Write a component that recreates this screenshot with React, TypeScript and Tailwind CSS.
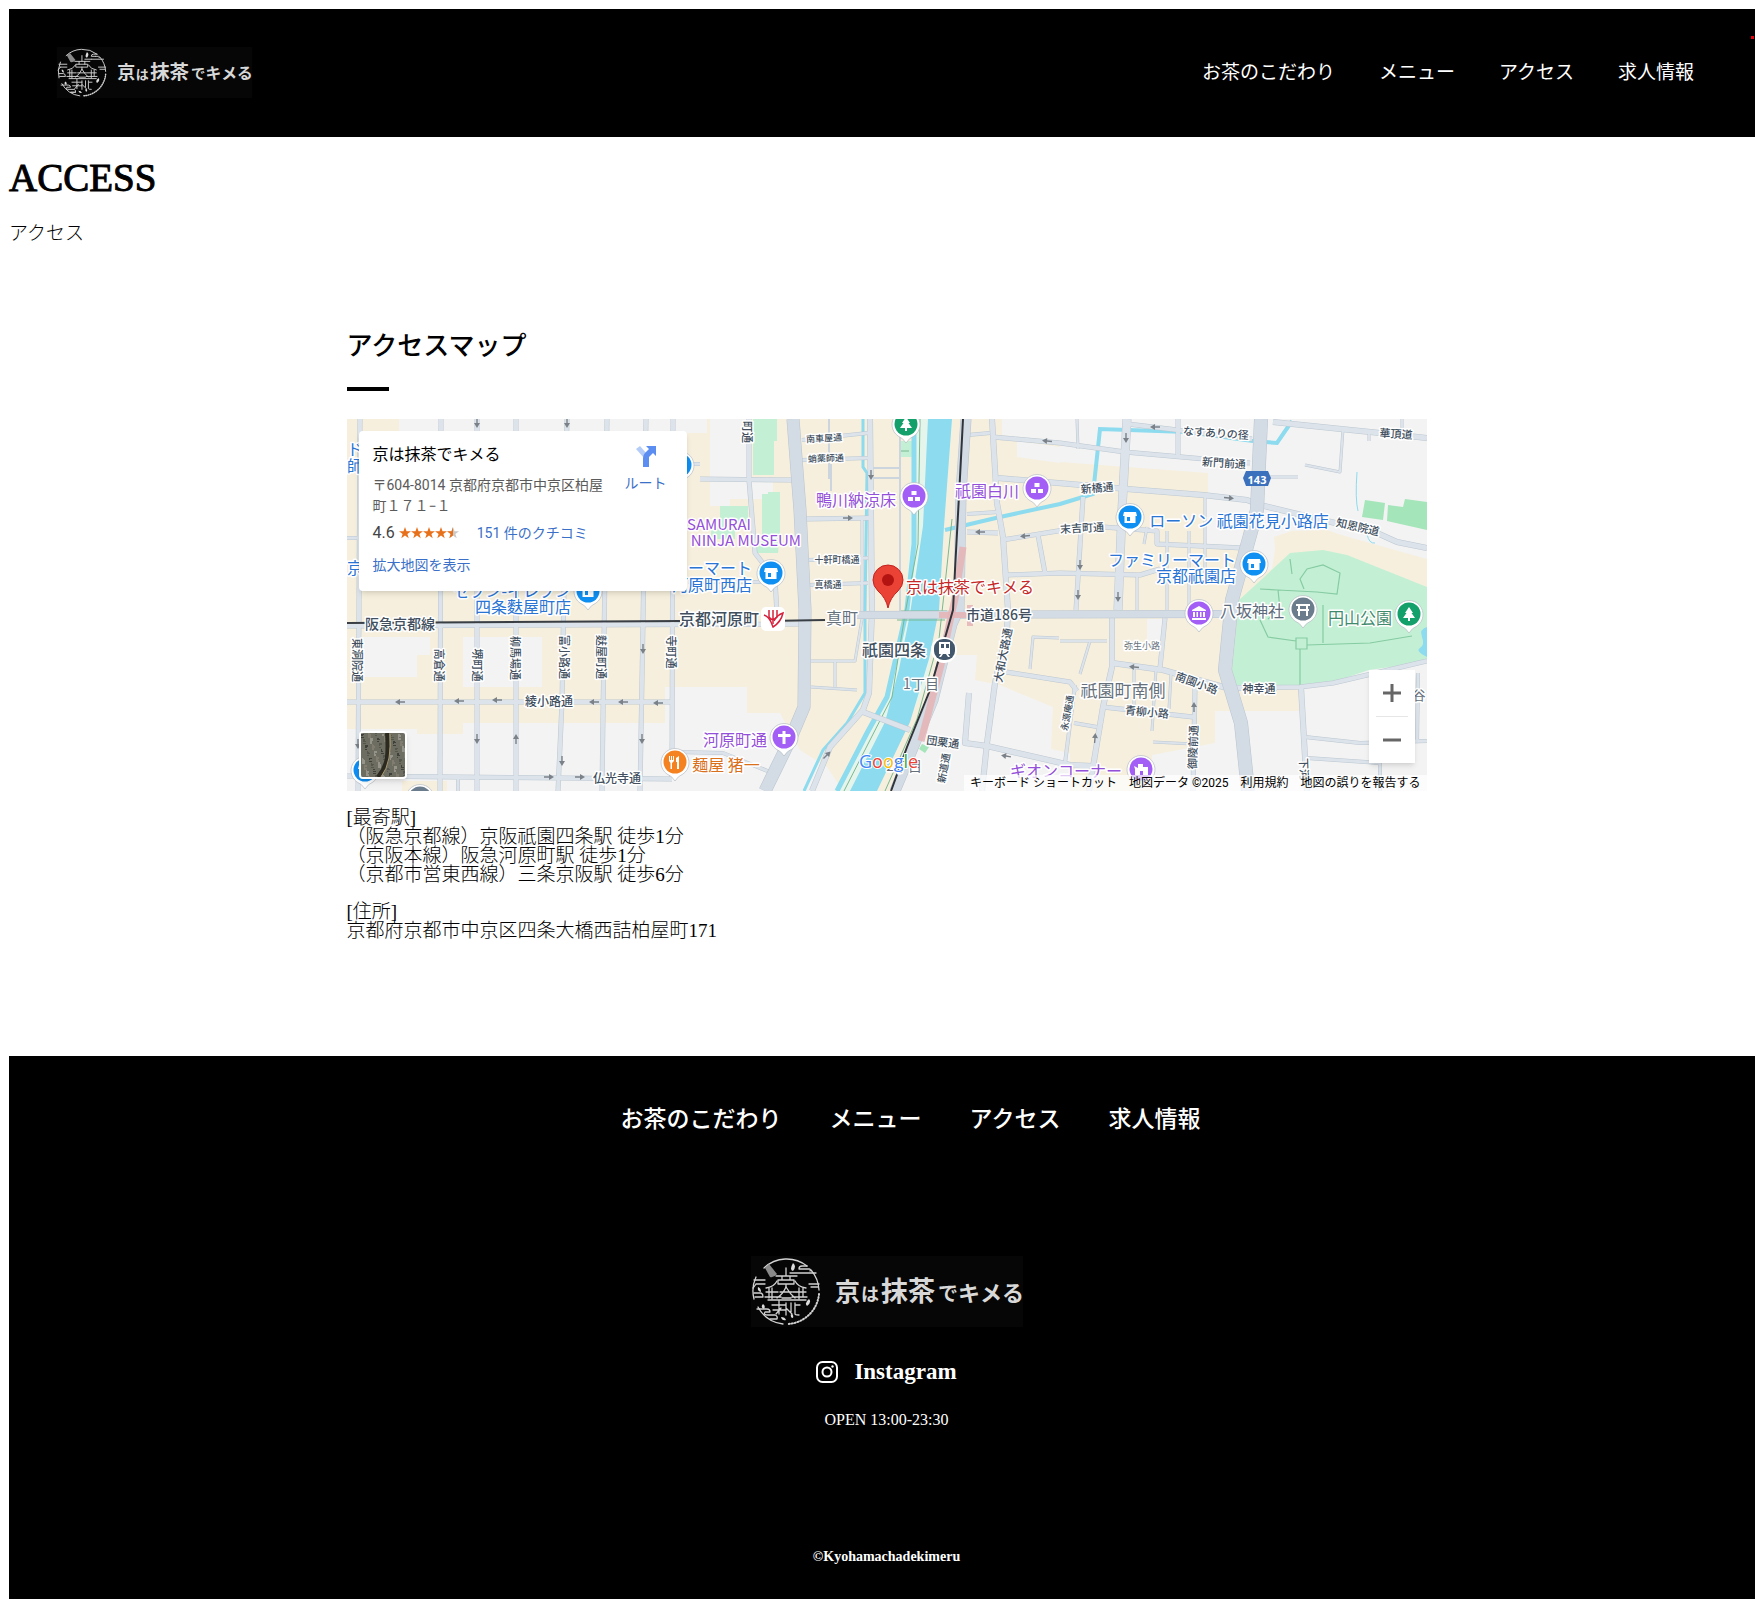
import type { ReactNode } from "react";

const SERIF = "font-['Liberation_Serif','Noto_Sans_CJK_JP',serif]";
const SANS = "font-['Roboto','Noto_Sans_CJK_JP',sans-serif]";

const links = ["お茶のこだわり", "メニュー", "アクセス", "求人情報"];

function Logo({ className }: { className: string }) {
  return (
    <svg viewBox="0 0 272 71" className={className} role="img" aria-label="京は抹茶でキメる">
      <rect width="272" height="71" fill="#060606" />
      <g fill="none" stroke="#d2d2d2" strokeWidth="1.3" strokeLinecap="round" strokeLinejoin="round">
        <path d="M13 12A33 33 0 0 1 56 10M60 14A33 33 0 0 1 68 34M5 21A33 33 0 0 0 3 43M7 51A33 33 0 0 0 32 68" />
        <path d="M68 38A33 33 0 0 1 37 68" strokeWidth="2" strokeDasharray="1 2" />
        <path d="M56 10h-5q-3 0-3 3h6M48 17h-9M48 17h17M54 13h4q2 0 1 2" />
        <path d="M3 24h11M5 28h9M5 28q-2 3-3 4M3 37h6q3 0 3 4H4M58 28h10M60 31h7" />
        <path d="M6 53h10q3 0 3 3h-5q-2 3 3 3h7q3 1 2 4h-7M26 63h-6" />
        <path d="M35 12v8M25 20h21M27 24h16v4H27zM35 28v3M31 20v4M39 20v4" />
        <path d="M26 25q-3 6-11 7M44 25q3 6 11 7M18 32v10M52 32v9M15 36h12M14 41h16M21 32v11M42 36h13M41 41h15M48 32v11M35 31q-3 7-9 11M35 31q4 7 9 11M29 36h12M31 42h9" />
        <path d="M17 44h38M21 49h14M22 54h13M28 45v13M35 47v12M30 52l-5 6M35 52l6 6M40 47v9M44 47v11q0 1 4 1M45 49h4" />
      </g>
      <g fill="#dcdcdc">
        <path d="M14 12l4-4 8 10q-3 4-7 3z" fill="#8a8a8a" />
        <path d="M42 7q4 3 0 8q-4-1 0-8zM7 31q3 1 3 5q-4-1-3-5zM12 48q3 2 1 5q-4-2-1-5zM58 43q3 3-2 7q-3-3 2-7zM30 61q4 0 5 3q-4 1-5-3zM40 58q3 0 2 4q-3 0-2-4z" />
      </g>
      <g fill="#d8d8d8" fontFamily="'Noto Sans CJK JP', sans-serif" fontWeight="700">
        <text x="84" y="45" fontSize="25">京</text>
        <text x="110" y="45" fontSize="18">は</text>
        <text x="130" y="45" fontSize="27">抹茶</text>
        <text x="187" y="45" fontSize="20">で</text>
        <text x="207" y="45" fontSize="22">キメる</text>
      </g>
    </svg>
  );
}

const roads: [string, number][] = [
  ["M13 0L11 372", 4], ["M94 0L93 372", 4], ["M130 0V372", 4], ["M169 0V372", 4],
  ["M220 0L215 283L211 372", 4], ["M260 0L255 372", 4], ["M299 0L296 204L293 372", 4],
  ["M326 0L325 358", 4], ["M0 283H325", 4], ["M0 357L325 360", 4], ["M111 358V372", 3],
  ["M0 119H12M325 45H353M341 163H420", 3], ["M0 207L455 205", 4],
  ["M353 60L445 61", 4], ["M402 0V61L408 134L428 160L430 195", 4],
  ["M455 21L521 14M455 41L521 39M461 141L521 139M463 166L521 164", 3],
  ["M458 100L523 99", 4], ["M515 100V200L508 242H463M488 243V268M464 268L510 271", 2],
  ["M523 0L525 191L522 274L516 291L483 328L465 372", 5],
  ["M482 0V60M523 49H552M523 59H552M553 0V195M484 45V72", 1],
  ["M516 293L563 311", 5], ["M330 333L376 334L423 353", 3],
  ["M645 0L650 84L656 118L661 191L660 211L648 264L640 324L635 372", 5],
  ["M621 16L643 14M620 95L651 93", 3],
  ["M646 18L713 24L778 33L903 44", 4],
  ["M651 59L723 65L780 70L856 76L900 81L913 86L1030 114L1050 123L1080 129", 5],
  ["M620 113L651 114M655 121L723 110L756 108L810 112V125L896 129", 4],
  ["M691 116L698 154M660 156L713 154L793 156L813 150", 4],
  ["M780 0L775 91L771 191", 8], ["M736 78L729 191", 4],
  ["M858 78V154M790 157V191M820 112V191M842 112V191M800 108L797 125M730 0L731 30", 2],
  ["M831 0V36M781 5L905 20", 4], ["M926 3L1033 14L1080 19", 5],
  ["M996 10L993 53L958 46M923 58H951M1055 0V14M1022 15V22", 2],
  ["M765 198V248L756 288L745 354L742 372", 5], ["M818 199L813 249", 4],
  ["M765 244L816 251L880 269L930 269", 5], ["M890 269L953 268L986 264L1080 242", 4],
  ["M954 268L958 338L960 372", 5], ["M958 318L1013 324L1080 322M960 339L1033 344V372M1071 254L1070 324", 3],
  ["M756 288L846 298", 4], ["M848 268L846 372", 4], ["M659 253L723 263L730 272", 4],
  ["M622 274L618 324L640 327L723 346L745 347", 5], ["M728 266L718 344M727 304L750 308", 3],
  ["M806 323L846 325M787 250V290M824 255L822 290M809 250L805 312M713 222H760M743 222L733 255", 2],
  ["M683 250L686 218L712 219", 2],
];

const mains: [string, number][] = [
  ["M446 0L453 91L458 191L457 288L443 321L418 372", 12],
  ["M508 196L875 195", 7],
  ["M619 0L614 74L612 190L605 205L586 281L548 372", 10],
  ["M914 0L910 91L885 181L878 251L894 304L901 372", 13],
];

type Label = [text: string, x: number, y: number, size: number, color: string, rotate?: number, anchor?: "end"];
const STREET = "#414f5e";
const BLUE = "#2a74d3";
const PURPLE = "#9450d8";
const labels: Label[] = [
  ["ド", 8, 29, 16, BLUE], ["師", 8, 46, 16, BLUE], ["京", 8, 148, 16, BLUE],
  ["綾小路通", 202, 281, 12, STREET], ["仏光寺通", 270, 358, 12, STREET], ["阪急京都線", 53, 204, 14, STREET],
  ["東洞院通", 11, 241, 11, STREET, 90], ["高倉通", 93, 246, 11, STREET, 90], ["堺町通", 131, 246, 11, STREET, 90],
  ["柳馬場通", 169, 239, 11, STREET, 90], ["富小路通", 218, 238, 11, STREET, 90], ["麩屋町通", 255, 238, 11, STREET, 90],
  ["寺町通", 325, 233, 11, STREET, 90], ["町通", 401, 13, 11, STREET, 90],
  ["セブン-イレブン", 224, 171, 16, BLUE, 0, "end"], ["四条麩屋町店", 224, 187, 16, BLUE, 0, "end"],
  ["京都河原町", 372, 199, 16, STREET], ["真町", 495, 198, 16, "#66707b"],
  ["南車屋通", 477, 19, 9, STREET, -3], ["蛸薬師通", 479, 39, 9, STREET, -2],
  ["十軒町橋通", 490, 140, 9, STREET], ["真橋通", 481, 165, 9, STREET],
  ["SAMURAI", 404, 104, 15, PURPLE, 0, "end"], ["NINJA MUSEUM", 454, 120, 15, PURPLE, 0, "end"],
  ["ファミリーマート", 405, 148, 16, BLUE, 0, "end"], ["河原町西店", 405, 165, 16, BLUE, 0, "end"],
  ["鴨川納涼床", 509, 80, 16, PURPLE], ["祇園白川", 640, 71, 16, PURPLE],
  ["市道186号", 652, 195, 14, STREET], ["祇園四条", 547, 230, 16, STREET], ["1丁目", 574, 264, 14, "#66707b"],
  ["2丁目", 575, 346, 14, "#66707b", 0, "end"],
  ["河原町通", 388, 320, 16, PURPLE], ["麺屋 猪一", 379, 345, 16, "#d9701c"],
  ["団栗通", 596, 322, 11, STREET, 8], ["新道通", 596, 349, 10, STREET, -80], ["大和大路通", 655, 236, 11, STREET, -79],
  ["新橋通", 750, 68, 11, STREET, -4], ["末吉町通", 735, 108, 11, STREET, -3], ["なすありの径", 869, 13, 11, STREET, 4],
  ["新門前通", 877, 43, 11, STREET, 4], ["華頂道", 1049, 14, 11, STREET, 4], ["知恩院道", 1011, 107, 11, STREET, 13],
  ["ローソン 祇園花見小路店", 892, 101, 16, BLUE],
  ["ファミリーマート", 889, 140, 16, BLUE, 0, "end"], ["京都祇園店", 889, 156, 16, BLUE, 0, "end"],
  ["八坂神社", 905, 191, 16, "#5d6c7c"], ["円山公園", 1013, 198, 16, "#3f8a6d"],
  ["弥生小路", 795, 226, 9, "#66707b"], ["祇園町南側", 776, 270, 17, "#66707b"],
  ["南園小路", 850, 263, 11, STREET, 20], ["神幸通", 912, 269, 11, STREET], ["青柳小路", 800, 292, 11, STREET, 5],
  ["御陵前通", 845, 328, 11, STREET, -88], ["永源庵通", 720, 294, 9, STREET, -80],
  ["ギオンコーナー", 775, 351, 16, PURPLE, 0, "end"], ["下河", 958, 350, 11, STREET, 88], ["谷", 1072, 275, 13, "#66707b"],
];

const arrows: [number, number, number][] = [
  [53, 283, 180], [112, 282, 180], [150, 281, 180], [247, 283, 180], [276, 283, 180], [311, 284, 180],
  [130, 320, 90], [169, 320, -90], [296, 230, 90], [295, 320, 90], [215, 342, 90], [202, 358, 0], [233, 358, 0],
  [11, 325, 90], [130, 4, 90], [220, 4, 90], [501, 99, 0], [524, 56, 90], [700, 22, 185], [633, 113, 180], [678, 117, 175],
  [808, 8, 180], [779, 19, 90], [882, 79, 5], [733, 146, 90], [731, 176, 90], [771, 178, 90], [787, 248, 185],
  [847, 288, -90], [748, 319, -85], [659, 337, -170], [480, 336, -45],
];

function Pin({ x, y, color, children }: { x: number; y: number; color: string; children?: ReactNode }) {
  return (
    <g transform={`translate(${x} ${y})`}>
      <path d="M0 18Q-3 13-8 11A14 14 0 1 1 8 11Q3 13 0 18Z" fill="#fff" stroke="#b6bcc3" strokeWidth="0.7" />
      <circle r="11.5" cy="-1" fill={color} />
      <g fill="#fff">{children}</g>
    </g>
  );
}

const shop = <path d="M-6-6H6L7-2H5.500V5H-5.500V-2H-7ZM-3-1V3H0V-1Z" fillRule="evenodd" />;
const blocks = <path d="M-2.500-6H2.500V-2H-2.500ZM-6 0H-1V4H-6ZM1 0H6V4H1Z" />;
const tree = <path d="M0-8L4-2H2.500L6 3H1V6H-1V3H-6L-2.500-2H-4Z" />;

function MapDrawing() {
  return (
    <svg viewBox="0 0 1080 372" preserveAspectRatio="xMidYMid slice" className="block h-full w-full" role="img" aria-label="周辺地図">
      <rect width="1080" height="372" fill="#f6efdd" />
      <g fill="#f3f3f3">
        <path d="M52 0H360V14H52ZM16 218H83V236H70V258H16ZM116 218H195V268H116ZM363 0H403V59H426V80H383V87H363Z" />
        <path d="M0 310H70V315H116V304H318V268H400V294H433L453 331L480 348L496 372H100V362H55V372H0Z" />
        <path d="M601 236H630L628 261L653 266L706 288L704 330L723 334V372H553ZM670 22L713 28V44L670 38Z" />
        <path d="M655 0H1080V140L980 112L930 118L925 150L900 160L905 100L861 75V54L713 43V24L655 16ZM858 78L898 82L895 128H858Z" />
        <path d="M888 292H952V260L1080 235V372H805V336L868 324V292ZM800 200H818L815 226H800Z" />
      </g>
      <path d="M927 118L945 112L980 111L1080 147V168L1000 137L976 131L943 134L930 150Z" fill="#f6efdd" />
      <g fill="#c3f0d4">
        <path d="M406 0H430V22H427V56H406ZM415 75H421V73H433V112L431 134H408V128L415 125ZM373 87H401V104H388V120H364V104H373ZM553 22H566V38H553Z" />
        <path d="M943 134L976 131L1000 136L1080 168V243L1022 251L986 263L953 268H890L885 251L892 181L915 160Z" />
      </g>
      <path d="M1018 81L1038 84L1036 101L1015 98ZM1041 86L1056 88L1058 80L1080 83V111L1040 102ZM575 325L582 328L578 334L572 330Z" fill="#a4e5b9" />
      <path d="M1080 208Q1072 210 1075 218T1073 229T1080 238Z" fill="#8cdbee" />

      <path d="M566 0H605L597 107L590 191L580 262L530 372H487L520 314L544 274L560 190Z" fill="#e6f5ec" />
      <path d="M581 0H605L597 107L592 191L582 240L563 303L530 372H503L538 303L552 250L563 195L576 107Z" fill="#8cdbee" />
      <g fill="none" stroke="#8cdbee">
        <path d="M567 0V125L560 190L540 278L520 314L490 372" strokeWidth="5" />
        <path d="M516 0V48L520 54L518 191V274L500 304L476 331L457 372" strokeWidth="3" />
        <path d="M598 111L653 98L713 85L746 75L753 10L840 13L906 22L930 24L945 2" strokeWidth="4" />
        <path d="M1010 53Q1008 80 1011 92M1020 115Q1022 125 1028 124" strokeWidth="1" />
      </g>
      <g fill="none" stroke="#79b98f" strokeWidth="1">
        <path d="M573 0L571 125L558 195L545 278L497 372M605 100L597 175L592 220L570 300L538 372M553 192H600M550 201H598M553 32H562" />
        <path d="M913 170L931 171L970 173L990 175L993 154L976 146L960 150L953 160L957 170M931 171L933 190L921 200M953 266V230M949 219H960V230H949ZM960 226L1023 224L1065 217M913 201L921 218L949 222M976 186V224M945 155L943 140" strokeWidth="1.200" stroke="#86cba2" />
      </g>

      <g fill="none" strokeLinejoin="round">
        {roads.map(([d, w]) => <path key={d} d={d} stroke="#bcc7d1" strokeWidth={w + 1} />)}
        {roads.map(([d, w]) => <path key={d} d={d} stroke="#dce3ea" strokeWidth={w} />)}
        {mains.map(([d, w]) => <path key={d} d={d} stroke="#b9c4cf" strokeWidth={w + 1} />)}
        {mains.map(([d, w]) => <path key={d} d={d} stroke="#d3dbe4" strokeWidth={w} />)}
        <path d="M616 128L608 180L604 197L594 246L574 322" stroke="#e5b3b5" strokeWidth="7" opacity="0.850" />
        <path d="M592 196H624M623 186V207" stroke="#e5b3b5" strokeWidth="6" opacity="0.850" />
        <path d="M616 0L613 58L608 151L606 191L589 250L583 271L560 328L544 372" stroke="#30353b" strokeWidth="2" />
        <path d="M0 204L333 202M420 202L478 201" stroke="#3a3f46" strokeWidth="2" />
      </g>
      <g fill="#7b8188">
        {arrows.map(([x, y, r]) => (
          <path key={`${x}-${y}`} d="M-5-.7H0V-3L5 0L0 3V.7H-5Z" transform={`translate(${x} ${y}) rotate(${r})`} />
        ))}
      </g>

      <Pin x={333} y={47} color="#0f8ff2">{shop}</Pin>
      <Pin x={241} y={173} color="#0f8ff2">{shop}</Pin>
      <Pin x={424} y={155} color="#0f8ff2">{shop}</Pin>
      <Pin x={783} y={99} color="#0f8ff2">{shop}</Pin>
      <Pin x={907} y={146} color="#0f8ff2">{shop}</Pin>
      <Pin x={18} y={352} color="#0f8ff2">{shop}</Pin>
      <Pin x={73} y={380} color="#6b7c8c" />
      <Pin x={567} y={78} color="#a35ff5">{blocks}</Pin>
      <Pin x={690} y={70} color="#a35ff5">{blocks}</Pin>
      <Pin x={559} y={6} color="#14a06b">{tree}</Pin>
      <Pin x={1062} y={196} color="#14a06b">{tree}</Pin>
      <Pin x={437} y={319} color="#a35ff5"><path d="M-1.500-7H1.500V-4H6L7-2.500L6-1H1.500V6H-1.500V-1H-6V-4H-1.500Z" /></Pin>
      <Pin x={328} y={344} color="#f58220">
        <path d="M-6-7H-5V-3H-4V-7H-3V-3H-2V-7H-1V-2L-3 0V6H-4.500V0L-6-2ZM2 6V-1H1V-5L4-7V6Z" />
      </Pin>
      <Pin x={852} y={195} color="#a35ff5"><path d="M0-8L7-4V-3H-7V-4ZM-6-2H-4V3H-6ZM-2.500-2H-1V3H-2.500ZM1-2H2.500V3H1ZM4-2H6V3H4ZM-7 4H7V6H-7Z" /></Pin>
      <Pin x={956} y={191} color="#6b7c8c"><path d="M-7-6H7V-4H5V-1H6V1H5V6H3V1H-3V6H-5V1H-6V-1H-5V-4H-7ZM-3-4V-1H3V-4Z" fillRule="evenodd" /></Pin>
      <Pin x={794} y={351} color="#a35ff5"><path d="M-7-4L-3-2V-6H2V-3H7V5H2V1H-1V5H-6V-1Z" /></Pin>

      <rect x="414" y="188" width="24" height="24" rx="5" fill="#fff" />
      <path d="M417 196Q422 198 424 203T426 208Q434 203 436 194Q430 196 427 202" fill="none" stroke="#d61f3a" strokeWidth="1.500" />
      <path d="M422 191V198Q425 203 430 198V191M426 191V205" fill="none" stroke="#d61f3a" strokeWidth="1.500" />

      <circle cx="597" cy="231" r="13" fill="#fff" />
      <rect x="587" y="220" width="21" height="21" rx="9" fill="#42576b" />
      <path d="M592 223H603V235H592ZM594 225V229H597V225ZM599 225V229H602V225ZM594 235L592 238H594L596 235ZM601 235L603 238H601L599 235Z" fill="#fff" fillRule="evenodd" />

      <path d="M899 52H921L924 59L921 67H899L896 59Z" fill="#3b70bd" />
      <text x="910" y="60" fontSize="11" fontWeight="700" fill="#fff" textAnchor="middle" dominantBaseline="central" fontFamily="'Noto Sans', sans-serif">143</text>

      <g fontFamily="'Noto Sans CJK JP', sans-serif" stroke="#fff" strokeWidth="3" strokeLinejoin="round" paintOrder="stroke" dominantBaseline="central">
        {labels.map(([text, x, y, size, color, rotate = 0, anchor]) => (
          <text key={`${text}-${x}`} x={x} y={y} fontSize={size} fontWeight={color === STREET ? 500 : 400} fill={color} textAnchor={anchor ?? "middle"} transform={`rotate(${rotate} ${x} ${y})`}>
            {text}
          </text>
        ))}
        <text x="559" y="167" fontSize="16" fill="#c62828">京は抹茶でキメる</text>
      </g>

      <path d="M541 189Q539 179 531 172Q526 167 526 161A15 15 0 0 1 556 161Q556 167 551 172Q543 179 541 189Z" fill="#ea4335" stroke="#c5221f" strokeWidth="1" />
      <circle cx="541" cy="161" r="6" fill="#b31412" />

      <text x="512" y="349" fontSize="18" fontFamily="'Open Sans', sans-serif" stroke="#fff" strokeWidth="2" paintOrder="stroke">
        <tspan fill="#4285f4">G</tspan><tspan fill="#ea4335">o</tspan><tspan fill="#fbbc04">o</tspan><tspan fill="#4285f4">g</tspan><tspan fill="#34a853">l</tspan><tspan fill="#ea4335">e</tspan>
      </text>
    </svg>
  );
}

const star = "M6 0L7.500 4.200H12L8.400 6.900L9.700 11.200L6 8.600L2.300 11.200L3.600 6.900L0 4.200H4.500Z";

function PlaceCard() {
  return (
    <div className="absolute left-3 top-3 flex h-40 w-82 justify-between rounded-sm bg-white pl-3.5 pr-5 shadow-md">
      <div className="pt-3">
        <h3 className="text-base leading-6 text-black">京は抹茶でキメる</h3>
        <p className="mt-2 w-60 text-sm leading-[21px] text-[#5b5b5b]">
          〒604-8014 京都府京都市中京区柏屋<br />町１７１−１
        </p>
        <div className="mt-1 flex items-center leading-6">
          <span className="text-base text-[#444]">4.6</span>
          <svg viewBox="0 0 62 12" className="ml-1 h-3 w-[62px]" role="img" aria-label="4.6">
            {[0, 12, 24, 36].map((x) => <path key={x} d={star} transform={`translate(${x} 0)`} fill="#e7711b" />)}
            <path d={star} transform="translate(48 0)" fill="#c9c9c9" />
            <path d="M54 0V8.600L50.300 11.200L51.600 6.900L48 4.200H52.500Z" fill="#e7711b" />
          </svg>
          <a href="#reviews" className="ml-4 text-sm text-[#3a70c8]">151 件のクチコミ</a>
        </div>
        <a href="#large-map" className="mt-2 block text-sm leading-6 text-[#3a70c8]">拡大地図を表示</a>
      </div>
      <a href="#route" className="flex flex-col items-center pt-3.5 text-sm text-[#3a70c8]">
        <svg viewBox="0 0 22 22" className="h-[22px] w-[22px]">
          <path d="M1 4L5 1L12 9L9 13Z" fill="#b4ccf8" />
          <path d="M8 22V13Q8 10 10 8L14 4L11 1H21V11L18 8L14 12V22Z" fill="#5c8df0" />
        </svg>
        <span className="mt-1.5">ルート</span>
      </a>
    </div>
  );
}

function SatelliteButton() {
  return (
    <button type="button" aria-label="航空写真" className="absolute bottom-3 left-3 h-12 w-12 overflow-hidden rounded-sm border-2 border-white shadow-md">
      <svg viewBox="0 0 44 44" className="h-full w-full">
        <rect width="44" height="44" fill="#6d6d62" />
        {Array.from({ length: 240 }, (_, i) => (
          <rect key={i} x={(i * 17) % 44} y={(i * 29 + ((i * i) % 7)) % 44} width={1 + (i % 3)} height={1 + (i % 2)} fill={["#3f4039", "#96948a", "#55564c", "#807d70"][i % 4]} />
        ))}
        <path d="M26 0Q27 14 26 24T17 44" fill="none" stroke="#2c2a20" strokeWidth="4" />
        <path d="M29 0Q30 14 28 25T20 44" fill="none" stroke="#a99a70" strokeWidth="1" />
      </svg>
    </button>
  );
}

function AccessMap() {
  return (
    <div className={`relative mt-7 h-[372px] overflow-hidden ${SANS}`}>
      <MapDrawing />
      <PlaceCard />
      <SatelliteButton />
      <div className="absolute bottom-7 right-3 flex w-[46px] flex-col items-center bg-white shadow-md">
        <button type="button" aria-label="拡大" className="flex h-[46px] w-full items-center justify-center">
          <svg viewBox="0 0 20 20" className="h-5 w-5"><path d="M1 10H19M10 1V19" stroke="#666" strokeWidth="3" /></svg>
        </button>
        <span className="h-px w-8 bg-[#e6e6e6]" />
        <button type="button" aria-label="縮小" className="flex h-[46px] w-full items-center justify-center">
          <svg viewBox="0 0 20 20" className="h-5 w-5"><path d="M1 10H19" stroke="#666" strokeWidth="3" /></svg>
        </button>
      </div>
      <div className="absolute bottom-0 right-0 flex h-4 items-center gap-3 bg-white/70 px-1.5 text-xs leading-4 text-black">
        <button type="button">キーボード ショートカット</button>
        <span>地図データ ©2025</span>
        <a href="#terms">利用規約</a>
        <a href="#report">地図の誤りを報告する</a>
      </div>
    </div>
  );
}

export default function App() {
  return (
    <div className={`overflow-hidden bg-white py-2 text-black ${SERIF}`}>
      <div className="ml-[9px] w-screen">
        <header className="relative mt-px flex h-32 items-center justify-between bg-black pl-[47px] pr-[70px]">
          <a href="#top" className="pb-0.5"><Logo className="h-[51px] w-[197px]" /></a>
          <nav aria-label="メイン">
            <ul className="flex gap-11 text-[19px] leading-7 text-white">
              {links.map((l) => <li key={l}><a href="#page">{l}</a></li>)}
            </ul>
          </nav>
          <span className="absolute right-2.5 top-[27px] h-[3px] w-[3px] bg-red-600" />
        </header>

        <main>
          <h1 className="pt-[17px] text-[39px] leading-[48px] [-webkit-text-stroke:1px_black]">ACCESS</h1>
          <p className="mt-5 text-[19px] font-light leading-6">アクセス</p>

          <section className="mx-auto mt-19 max-w-[1080px] pb-29">
            <h2 className="text-[26px] font-medium leading-[50px]">アクセスマップ</h2>
            <div className="mt-[15px] h-1 w-[42px] bg-black" />
            <AccessMap />
            <div className="mt-[17px] text-[19px] font-light leading-[19px]">
              <p>[最寄駅]<br />（阪急京都線）京阪祇園四条駅 徒歩1分<br />（京阪本線）阪急河原町駅 徒歩1分<br />（京都市営東西線）三条京阪駅 徒歩6分</p>
              <p className="mt-[18px]">[住所]<br />京都府京都市中京区四条大橋西詰柏屋町171</p>
            </div>
          </section>
        </main>

        <footer className="flex flex-col items-center bg-black pb-8 pt-12 text-white">
          <nav aria-label="フッター" className="pl-12">
            <ul className="flex gap-12 text-[23px] font-medium leading-8">
              {links.map((l) => <li key={l}><a href="#page">{l}</a></li>)}
            </ul>
          </nav>
          <Logo className="mt-30 h-[71px] w-[272px]" />
          <a href="#instagram" className="mt-[29px] flex items-center gap-4 text-[23px] font-bold leading-8">
            <svg viewBox="0 0 22 22" className="h-[22px] w-[22px]" fill="none" stroke="#fff" strokeWidth="2">
              <rect x="1" y="1" width="20" height="20" rx="5.500" />
              <circle cx="11" cy="11" r="4.500" />
              <circle cx="16.500" cy="5.500" r="1.200" fill="#fff" stroke="none" />
            </svg>
            Instagram
          </a>
          <p className="mt-5 text-base leading-6">OPEN 13:00-23:30</p>
          <small className="mt-[115px] text-sm font-bold leading-5">©Kyohamachadekimeru</small>
        </footer>
      </div>
    </div>
  );
}
